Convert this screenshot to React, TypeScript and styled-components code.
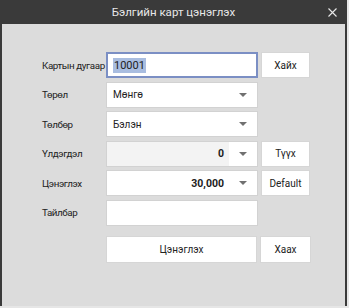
import React from "react";
import styled, { createGlobalStyle } from "styled-components";

const Global = createGlobalStyle`
  html, body { margin: 0; padding: 0; background: #e6e6e6; }
  body { font-family: Roboto, "Open Sans", sans-serif; }
`;

const Window = styled.div`
  width: 347px;
  height: 306px;
  box-sizing: border-box;
  border-left: 2px solid #3a3a3a;
  border-right: 2px solid #3a3a3a;
  background: #dcdcdc;
  display: flex;
  flex-direction: column;
`;

const TitleBar = styled.div`
  height: 24px;
  margin: 0 -2px;
  background: #3a3a3a;
  color: #e8e8e8;
  font-size: 11.5px;
  display: flex;
  align-items: center;
  justify-content: center;
  position: relative;
`;

const CloseIcon = styled.svg`
  position: absolute;
  right: 10px;
  top: 8px;
`;

const Form = styled.div`
  display: grid;
  grid-template-columns: 61px 152px 49px;
  grid-auto-rows: 26px;
  column-gap: 3px;
  row-gap: 3.5px;
  padding: 28px 0 0 40px;
  font-size: 10px;
  color: #222;
`;

const Label = styled.div`
  display: flex;
  align-items: center;
  grid-column: 1;
  white-space: nowrap;
  font-size: 9.8px;
  letter-spacing: -0.4px;
`;

const Field = styled.div<{ $focused?: boolean }>`
  grid-column: 2;
  box-sizing: border-box;
  border: ${(p) => (p.$focused ? "2px solid #7b8fc4" : "1px solid #d2d2d2")};
  background: #fff;
  display: flex;
  align-items: center;
  padding-left: ${(p) => (p.$focused ? "5px" : "6px")};
`;

const Selected = styled.span`
  background: #a9bde0;
  padding: 1px 1px;
  font-size: 11px;
`;

const Value = styled.span`
  flex: 1;
`;

const NumArea = styled.div<{ $disabled?: boolean }>`
  flex: 1;
  align-self: stretch;
  margin-left: -6px;
  background: ${(p) => (p.$disabled ? "#f3f3f3" : "#fff")};
  display: flex;
  align-items: center;
  justify-content: flex-end;
  padding-right: 5px;
  font-weight: 700;
  font-size: 10.5px;
`;

const Arrow = styled.span`
  width: 28px;
  display: flex;
  justify-content: center;
  &::after {
    content: "";
    border-left: 4px solid transparent;
    border-right: 4px solid transparent;
    border-top: 4px solid #707070;
  }
`;

const SideButton = styled.button`
  grid-column: 3;
  box-sizing: border-box;
  background: #fff;
  border: 1px solid #d6d6d6;
  font-family: inherit;
  font-size: 10px;
  color: #222;
  padding: 0;
`;

const Actions = styled.div`
  display: flex;
  gap: 3px;
  padding: 10.5px 0 0 104px;
`;

const ActionButton = styled.button<{ $w: number }>`
  width: ${(p) => p.$w}px;
  height: 27px;
  box-sizing: border-box;
  background: #fff;
  border: 1px solid #d6d6d6;
  font-family: Roboto, "Open Sans", sans-serif;
  font-size: 10px;
  color: #222;
  padding: 0;
`;

export default function App() {
  return (
    <>
      <Global />
      <Window>
        <TitleBar>
          Бэлгийн карт цэнэглэх
          <CloseIcon width="9" height="9" viewBox="0 0 9 9">
            <path d="M0.5 0.5 L8.5 8.5 M8.5 0.5 L0.5 8.5" stroke="#e8e8e8" strokeWidth="1.1" />
          </CloseIcon>
        </TitleBar>
        <Form>
          <Label>Картын дугаар</Label>
          <Field $focused>
            <Selected>10001</Selected>
          </Field>
          <SideButton>Хайх</SideButton>

          <Label>Төрөл</Label>
          <Field>
            <Value>Мөнгө</Value>
            <Arrow />
          </Field>

          <Label>Төлбөр</Label>
          <Field>
            <Value>Бэлэн</Value>
            <Arrow />
          </Field>

          <Label>Үлдэгдэл</Label>
          <Field>
            <NumArea $disabled>0</NumArea>
            <Arrow />
          </Field>
          <SideButton>Түүх</SideButton>

          <Label>Цэнэглэх</Label>
          <Field>
            <NumArea>30,000</NumArea>
            <Arrow />
          </Field>
          <SideButton>Default</SideButton>

          <Label>Тайлбар</Label>
          <Field />
        </Form>
        <Actions>
          <ActionButton $w={151}>Цэнэглэх</ActionButton>
          <ActionButton $w={51}>Хаах</ActionButton>
        </Actions>
      </Window>
    </>
  );
}
